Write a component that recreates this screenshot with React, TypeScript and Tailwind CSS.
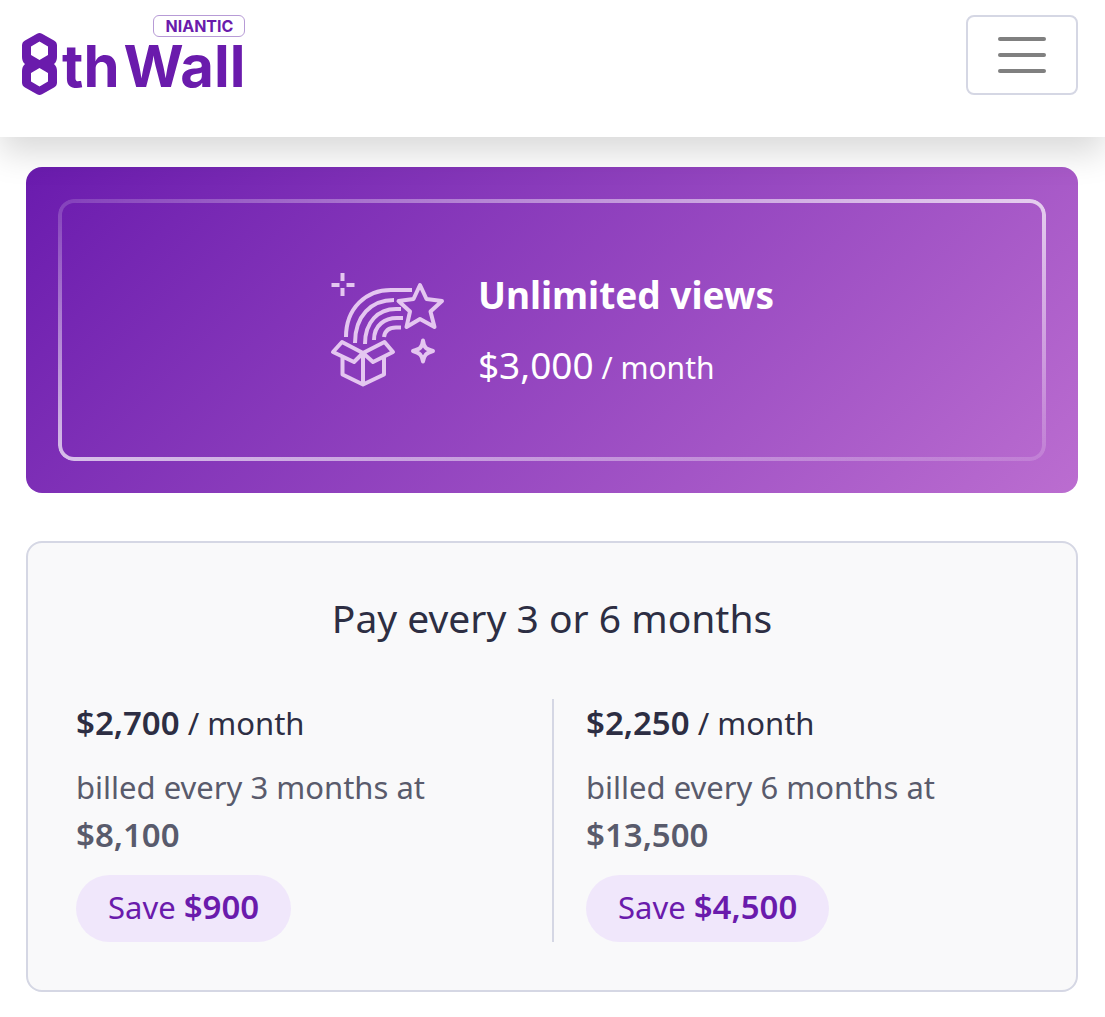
import React from 'react';

const PLANS = [
  { monthly: '$2,700', interval: 3, total: '$8,100', saving: '$900' },
  { monthly: '$2,250', interval: 6, total: '$13,500', saving: '$4,500' },
];

const Logo: React.FC = () => (
  <a href="#" aria-label="Niantic 8th Wall" className="flex flex-col items-end text-[#6a1bac]">
    <span className="flex h-[22px] w-[92px] items-center justify-center rounded-md border border-[#b79bd6] font-[Inter,sans-serif] text-base leading-none font-bold">
      NIANTIC
    </span>
    <span className="-mt-1 flex items-start">
      <svg width="36" height="62" viewBox="0 0 36 62" fill="currentColor" fillRule="evenodd" aria-hidden="true">
        <path d="M15 0.7Q17.5 -0.7 20 0.7L32 7.5Q35 9.2 35 12.5V24Q35 28.5 32 31Q35 33.5 35 38V49.5Q35 52.8 32 54.5L20 61.3Q17.5 62.7 15 61.3L3 54.5Q0 52.8 0 49.5V38Q0 33.5 3 31Q0 28.5 0 24V12.5Q0 9.2 3 7.5ZM17.5 8.5L9 13.5V22L17.5 27L26 22V13.5ZM17.5 35L9 40V48.5L17.5 53.5L26 48.5V40Z" />
      </svg>
      <span className="flex gap-1 pt-1 pl-1 font-[Inter,sans-serif] text-[58px] leading-[58px] font-bold">
        <span>th</span>
        <span>Wall</span>
      </span>
    </span>
  </a>
);

const RainbowIcon: React.FC = () => (
  <svg width="116" height="116" viewBox="0 0 116 116" fill="none" stroke="#e4c6f0" strokeWidth="4" strokeLinejoin="round" aria-hidden="true">
    <path d="M12.500 1v8M12.500 16v8M1.500 13h8M16.500 13h8" />
    <path d="M16 65C16 36 36 18 61 18H82" />
    <path d="M25 71C25 44 41 28 64 28" />
    <path d="M35 72C35 50 48 37 66 37H71" />
    <path d="M44 68C44 53 55 46 67 46H73" />
    <path d="M54 65C55 58 60 55.500 66 55.500H71" />
    <path d="M90 13L96.500 27L112 29L100.500 39.500L104.500 55L90 47L76.500 55L80 39.500L68.500 29L83.500 27Z" />
    <path d="M93 68.500C94 76 96 77 103 79C96 81 94 83 93 89.500C92 83 90 81 83 79C90 77 92 76 93 68.500Z" />
    <path d="M12 70L33 81L24 90L3 80ZM54.500 70L33 81L43 90L63 80ZM12.500 85V102.500L33 112.500L54 102.500V85M33 81V112.500" />
  </svg>
);

const App: React.FC = () => {
  return (
    <div className="min-h-screen bg-white font-['Noto_Sans',sans-serif] text-[#2d2e43]">
      <header className="relative z-10 flex items-start justify-between bg-white pt-[15px] pr-[27px] pb-[42px] pl-[22px] shadow-[0_16px_32px_rgba(0,0,0,0.15)]">
        <Logo />
        <button
          type="button"
          aria-label="Toggle navigation"
          className="flex h-20 w-28 flex-col items-center justify-center gap-3 rounded-lg border-2 border-[#d5d7e4]"
        >
          <span className="h-1 w-12 rounded-full bg-[#808080]"></span>
          <span className="h-1 w-12 rounded-full bg-[#808080]"></span>
          <span className="h-1 w-12 rounded-full bg-[#808080]"></span>
        </button>
      </header>

      <main className="flex flex-col gap-12 pt-[30px] pr-[27px] pb-6 pl-[26px]">
        {/* Current plan */}
        <section className="rounded-2xl bg-linear-[135deg] from-[#6a1bae] to-[#bb6dd0] p-8 text-white">
          <div className="relative flex h-[262px] items-center justify-center gap-8">
            {/* Gradient outline */}
            <div className="pointer-events-none absolute inset-0 rounded-2xl bg-linear-to-br from-white/15 via-white/70 to-white/15 p-1 [mask:linear-gradient(#000_0_0)_content-box_exclude,linear-gradient(#000_0_0)]"></div>
            <RainbowIcon />
            <div>
              <h1 className="text-[37px] leading-[72px] font-bold">Unlimited views</h1>
              <p className="text-3xl leading-[68px]">
                <span className="text-[37px] leading-[68px]">$3,000</span> / month
              </p>
            </div>
          </div>
        </section>

        {/* Prepaid options */}
        <section className="rounded-2xl border-2 border-[#d5d7e4] bg-[#f9f9fa] p-12">
          <h2 className="text-center text-[39px] leading-[54px]">Pay every 3 or 6 months</h2>
          <div className="mt-[54px] grid grid-cols-2">
            {PLANS.map((plan) => (
              <div key={plan.interval} className="text-[31px] leading-12 last:border-l-2 last:border-[#d5d7e4] last:pl-8">
                <p className="h-12">
                  <strong className="text-[33px] font-semibold">{plan.monthly}</strong> / month
                </p>
                <p className="mt-4 h-24 pr-20 text-[#595b6c]">
                  billed every {plan.interval} months at <strong className="text-[33px] font-semibold">{plan.total}</strong>
                </p>
                <p className="mt-4 flex h-[67px] w-fit items-baseline rounded-full bg-[#f0e7fb] px-8 pt-2 whitespace-pre text-[#6a1bac]">
                  Save <strong className="text-[33px] font-semibold">{plan.saving}</strong>
                </p>
              </div>
            ))}
          </div>
        </section>
      </main>
    </div>
  );
};

export default App;
